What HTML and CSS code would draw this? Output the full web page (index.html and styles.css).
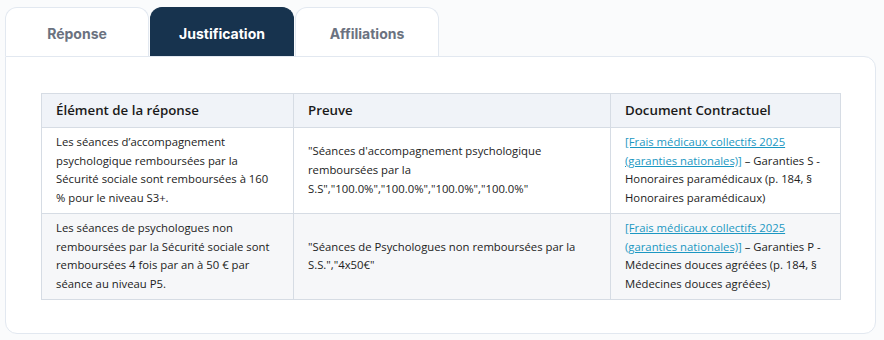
FILE: index.html
```html
<!DOCTYPE html>
<html lang="fr">
<head>
<meta charset="utf-8">
<link rel="stylesheet" href="styles.css">
</head>
<body>
<div class="page">
  <div class="tabs">
    <div class="tab">Réponse</div>
    <div class="tab active">Justification</div>
    <div class="tab">Affiliations</div>
  </div>
  <div class="card">
    <table class="just">
      <colgroup>
        <col class="c1"><col class="c2"><col class="c3">
      </colgroup>
      <thead>
        <tr>
          <th>Élément de la réponse</th>
          <th>Preuve</th>
          <th>Document Contractuel</th>
        </tr>
      </thead>
      <tbody>
        <tr>
          <td>Les séances d’accompagnement<br>psychologique remboursées par la<br>Sécurité sociale sont remboursées à 160<br>% pour le niveau S3+.</td>
          <td>"Séances d'accompagnement psychologique<br>remboursées par la<br>S.S","100.0%","100.0%","100.0%","100.0%"</td>
          <td><a href="#">[Frais médicaux collectifs 2025<br>(garanties nationales)]</a> – Garanties S -<br>Honoraires paramédicaux (p. 184, §<br>Honoraires paramédicaux)</td>
        </tr>
        <tr class="alt">
          <td>Les séances de psychologues non<br>remboursées par la Sécurité sociale sont<br>remboursées 4 fois par an à 50 € par<br>séance au niveau P5.</td>
          <td>"Séances de Psychologues non remboursées par la<br>S.S.","4x50€"</td>
          <td><a href="#">[Frais médicaux collectifs 2025<br>(garanties nationales)]</a> – Garanties P -<br>Médecines douces agréées (p. 184, §<br>Médecines douces agréées)</td>
        </tr>
      </tbody>
    </table>
  </div>
</div>
</body>
</html>
```
FILE: styles.css
```css
* { box-sizing: border-box; }
html, body { margin: 0; padding: 0; }
body {
  background: #fafbfc;
  font-family: Inter, "Liberation Sans", sans-serif;
  width: 884px;
  height: 340px;
  overflow: hidden;
}
.page {
  padding: 7px 8px 0 5px;
}
.tabs {
  display: flex;
  gap: 1px;
}
.tab {
  width: 144px;
  height: 49px;
  display: flex;
  align-items: center;
  justify-content: center;
  font-size: 14px;
  font-weight: 700;
  color: #6b7280;
  background: #ffffff;
  border: 1px solid #e2e8f0;
  border-bottom: none;
  border-radius: 12px 12px 0 0;
  padding-top: 2px;
}
.tab.active {
  background: #17334e;
  border-color: #17334e;
  color: #ffffff;
}
.card {
  background: #ffffff;
  border: 1px solid #e2e8f0;
  border-radius: 0 12px 12px 12px;
  padding: 36px 35px 35px;
  height: 278px;
}
.just {
  border-collapse: collapse;
  width: 799px;
  font-family: "Open Sans", "Noto Sans", sans-serif;
  color: #222222;
  table-layout: fixed;
}
.c1 { width: 252px; }
.c2 { width: 317px; }
.c3 { width: 230px; }
.just th, .just td {
  border: 1px solid #d6dce4;
  text-align: left;
  padding: 5px 14px;
}
.just th {
  background: #f0f3f8;
  font-size: 13.3px;
  font-weight: 600;
  line-height: 17px;
  padding-top: 8px;
  padding-bottom: 8px;
  color: #1a1a1a;
}
.just td {
  font-size: 11.3px;
  line-height: 18.7px;
  vertical-align: middle;
  white-space: nowrap;
}
.just tr.alt td { background: #f6f7f9; }
.just a {
  color: #1b97c2;
  text-decoration: underline;
}
```
